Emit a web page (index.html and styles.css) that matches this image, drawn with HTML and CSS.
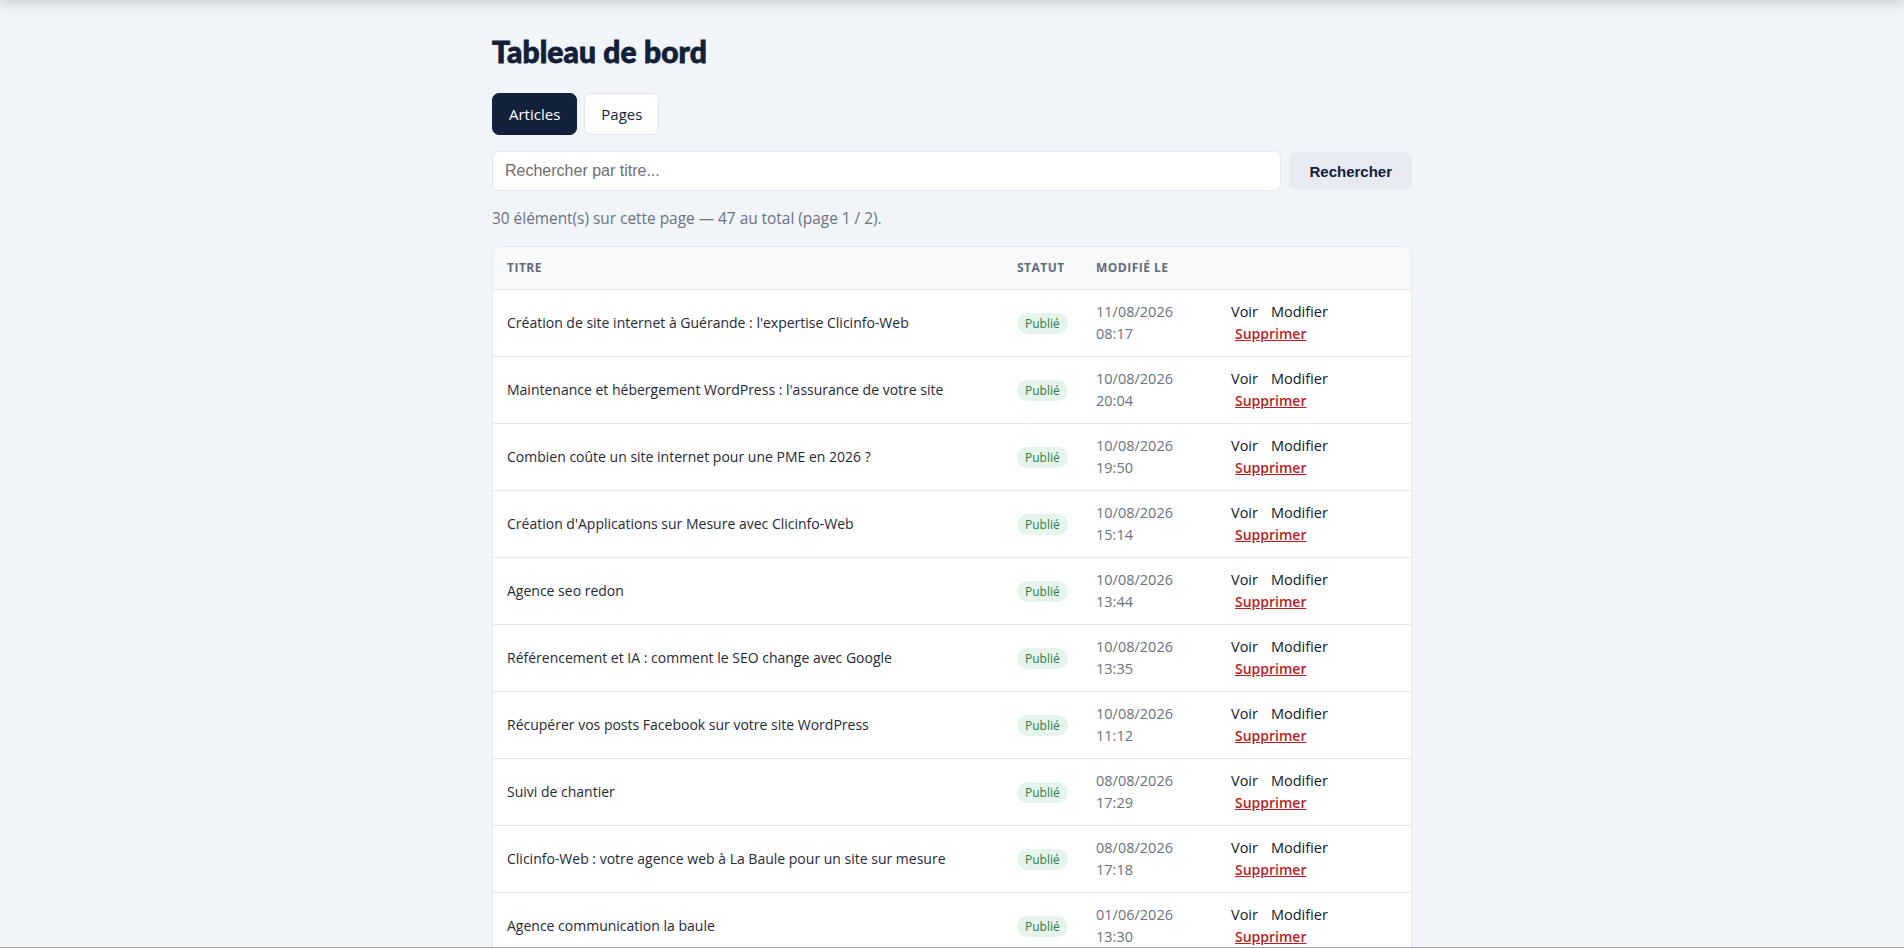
FILE: index.html
```html
<!DOCTYPE html>
<html lang="fr">
<head>
<meta charset="utf-8">
<title>Tableau de bord</title>
<link rel="stylesheet" href="styles.css">
</head>
<body>
<div class="top-shadow"></div>
<main class="wrap">
  <h1 class="title">Tableau de bord</h1>
  <nav class="tabs">
    <a class="tab tab-active" href="#">Articles</a>
    <a class="tab" href="#">Pages</a>
  </nav>
  <form class="search">
    <input class="search-input" type="text" placeholder="Rechercher par titre...">
    <button class="search-btn" type="button">Rechercher</button>
  </form>
  <p class="info">30 élément(s) sur cette page — 47 au total (page 1 / 2).</p>
  <div class="card">
    <table class="table">
      <colgroup>
        <col class="col-title">
        <col class="col-status">
        <col class="col-date">
        <col class="col-actions">
      </colgroup>
      <thead>
        <tr>
          <th>Titre</th>
          <th>Statut</th>
          <th>Modifié le</th>
          <th></th>
        </tr>
      </thead>
      <tbody>
        <tr>
          <td>Création de site internet à Guérande : l'expertise Clicinfo-Web</td>
          <td><span class="badge">Publié</span></td>
          <td class="date">11/08/2026<br>08:17</td>
          <td class="actions"><div><a href="#">Voir</a><a href="#">Modifier</a></div><div><button class="del" type="button">Supprimer</button></div></td>
        </tr>
        <tr>
          <td>Maintenance et hébergement WordPress : l'assurance de votre site</td>
          <td><span class="badge">Publié</span></td>
          <td class="date">10/08/2026<br>20:04</td>
          <td class="actions"><div><a href="#">Voir</a><a href="#">Modifier</a></div><div><button class="del" type="button">Supprimer</button></div></td>
        </tr>
        <tr>
          <td>Combien coûte un site internet pour une PME en 2026 ?</td>
          <td><span class="badge">Publié</span></td>
          <td class="date">10/08/2026<br>19:50</td>
          <td class="actions"><div><a href="#">Voir</a><a href="#">Modifier</a></div><div><button class="del" type="button">Supprimer</button></div></td>
        </tr>
        <tr>
          <td>Création d'Applications sur Mesure avec Clicinfo-Web</td>
          <td><span class="badge">Publié</span></td>
          <td class="date">10/08/2026<br>15:14</td>
          <td class="actions"><div><a href="#">Voir</a><a href="#">Modifier</a></div><div><button class="del" type="button">Supprimer</button></div></td>
        </tr>
        <tr>
          <td>Agence seo redon</td>
          <td><span class="badge">Publié</span></td>
          <td class="date">10/08/2026<br>13:44</td>
          <td class="actions"><div><a href="#">Voir</a><a href="#">Modifier</a></div><div><button class="del" type="button">Supprimer</button></div></td>
        </tr>
        <tr>
          <td>Référencement et IA : comment le SEO change avec Google</td>
          <td><span class="badge">Publié</span></td>
          <td class="date">10/08/2026<br>13:35</td>
          <td class="actions"><div><a href="#">Voir</a><a href="#">Modifier</a></div><div><button class="del" type="button">Supprimer</button></div></td>
        </tr>
        <tr>
          <td>Récupérer vos posts Facebook sur votre site WordPress</td>
          <td><span class="badge">Publié</span></td>
          <td class="date">10/08/2026<br>11:12</td>
          <td class="actions"><div><a href="#">Voir</a><a href="#">Modifier</a></div><div><button class="del" type="button">Supprimer</button></div></td>
        </tr>
        <tr>
          <td>Suivi de chantier</td>
          <td><span class="badge">Publié</span></td>
          <td class="date">08/08/2026<br>17:29</td>
          <td class="actions"><div><a href="#">Voir</a><a href="#">Modifier</a></div><div><button class="del" type="button">Supprimer</button></div></td>
        </tr>
        <tr>
          <td>Clicinfo-Web : votre agence web à La Baule pour un site sur mesure</td>
          <td><span class="badge">Publié</span></td>
          <td class="date">08/08/2026<br>17:18</td>
          <td class="actions"><div><a href="#">Voir</a><a href="#">Modifier</a></div><div><button class="del" type="button">Supprimer</button></div></td>
        </tr>
        <tr>
          <td>Agence communication la baule</td>
          <td><span class="badge">Publié</span></td>
          <td class="date">01/06/2026<br>13:30</td>
          <td class="actions"><div><a href="#">Voir</a><a href="#">Modifier</a></div><div><button class="del" type="button">Supprimer</button></div></td>
        </tr>
      </tbody>
    </table>
  </div>
</main>
<div class="bottom-line"></div>
</body>
</html>
```
FILE: styles.css
```css
html, body {
  margin: 0;
  padding: 0;
}
body {
  background: #f1f4f8;
  font-family: "Open Sans", "Noto Sans", sans-serif;
  font-size: 14px;
  color: #1f2937;
}
.top-shadow {
  position: fixed;
  top: -12px;
  left: 0;
  right: 0;
  height: 12px;
  box-shadow: 0 2px 14px rgba(15, 23, 42, 0.22);
}
.bottom-line {
  position: fixed;
  left: 0;
  right: 0;
  bottom: 0;
  height: 1px;
  background: #a3a6ab;
}
.wrap {
  width: 920px;
  margin: 0 auto;
  padding-top: 34px;
}
.title {
  margin: 0 0 25px;
  font-family: "Lato", sans-serif;
  font-weight: 900;
  font-size: 30px;
  line-height: 34px;
  color: #12203a;
  -webkit-text-stroke: 0.8px #12203a;
  letter-spacing: 0.1px;
}
.tabs {
  display: flex;
  gap: 7px;
  margin-bottom: 16px;
}
.tab {
  display: block;
  height: 42px;
  box-sizing: border-box;
  padding: 0 16px;
  line-height: 40px;
  border: 1px solid #e3e7ee;
  border-radius: 7px;
  background: #ffffff;
  color: #12203a;
  font-size: 15px;
  text-decoration: none;
}
.tab-active {
  background: #13213c;
  border-color: #13213c;
  color: #ffffff;
}
.search {
  display: flex;
  gap: 8px;
  align-items: center;
  margin: 0 0 17px;
}
.search-input {
  flex: 1;
  height: 40px;
  box-sizing: border-box;
  padding: 0 12px;
  border: 1px solid #e3e7ee;
  border-radius: 7px;
  background: #ffffff;
  font-family: "Liberation Sans", Arial, sans-serif;
  font-size: 16px;
  color: #111827;
  outline: none;
}
.search-input::placeholder {
  color: #6f6f6f;
}
.search-btn {
  height: 38px;
  padding: 0 20px;
  border: none;
  border-radius: 7px;
  background: #e7ebf1;
  font-family: "Liberation Sans", Arial, sans-serif;
  font-weight: 700;
  font-size: 15px;
  color: #12203a;
}
.info {
  margin: 0 0 16px;
  font-size: 15.4px;
  line-height: 22px;
  color: #6b7280;
}
.card {
  background: #ffffff;
  border: 1px solid #e7eaef;
  border-radius: 11px;
  overflow: hidden;
}
.table {
  width: 100%;
  border-collapse: collapse;
  table-layout: fixed;
}
.col-title { width: 510px; }
.col-status { width: 79px; }
.col-date { width: 135px; }
.col-actions { width: 194px; }
.table th {
  background: #f8fafc;
  padding: 12px 14px;
  height: 42px;
  box-sizing: border-box;
  text-align: left;
  font-size: 12px;
  font-weight: 700;
  text-transform: uppercase;
  letter-spacing: 0.04em;
  color: #5f6b7a;
  border-bottom: 1px solid #e5e8ed;
  white-space: nowrap;
}
.table td {
  padding: 11px 14px;
  font-size: 14px;
  line-height: 22px;
  vertical-align: middle;
  border-bottom: 1px solid #e5e8ed;
  color: #1f2937;
}
.badge {
  display: inline-block;
  padding: 0 8px;
  height: 21px;
  line-height: 21px;
  border-radius: 11px;
  background: #e6f5eb;
  color: #2f7d45;
  font-size: 12px;
}
.table td.date {
  color: #6b7280;
  font-size: 14.5px;
}
.actions a {
  color: #111827;
  text-decoration: none;
  margin-right: 13px;
  font-size: 14.5px;
}
.del {
  border: none;
  background: none;
  padding: 0 0 0 4px;
  font-family: inherit;
  font-size: 14px;
  line-height: 22px;
  font-weight: 600;
  color: #b51f1f;
  text-decoration: underline;
  cursor: pointer;
}
```
